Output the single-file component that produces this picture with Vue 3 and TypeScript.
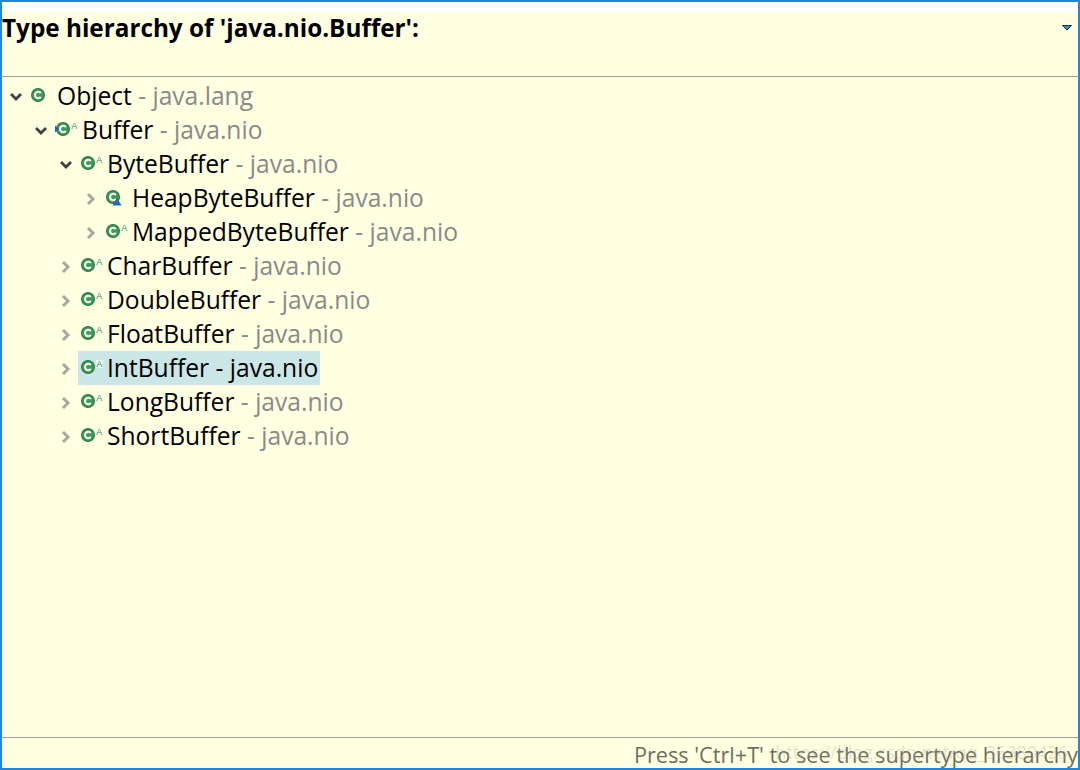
<script setup lang="ts">
interface Row { name: string; pkg: string; depth: number; open: boolean; badge: 'none' | 'a' | 'heap' | 'buffer'; selected?: boolean }
const rows: Row[] = [
  { name: 'Object', pkg: 'java.lang', depth: 0, open: true, badge: 'none' },
  { name: 'Buffer', pkg: 'java.nio', depth: 1, open: true, badge: 'buffer' },
  { name: 'ByteBuffer', pkg: 'java.nio', depth: 2, open: true, badge: 'a' },
  { name: 'HeapByteBuffer', pkg: 'java.nio', depth: 3, open: false, badge: 'heap' },
  { name: 'MappedByteBuffer', pkg: 'java.nio', depth: 3, open: false, badge: 'a' },
  { name: 'CharBuffer', pkg: 'java.nio', depth: 2, open: false, badge: 'a' },
  { name: 'DoubleBuffer', pkg: 'java.nio', depth: 2, open: false, badge: 'a' },
  { name: 'FloatBuffer', pkg: 'java.nio', depth: 2, open: false, badge: 'a' },
  { name: 'IntBuffer', pkg: 'java.nio', depth: 2, open: false, badge: 'a', selected: true },
  { name: 'LongBuffer', pkg: 'java.nio', depth: 2, open: false, badge: 'a' },
  { name: 'ShortBuffer', pkg: 'java.nio', depth: 2, open: false, badge: 'a' },
]
const indent = (d: number) => ({ paddingLeft: `${d * 25}px` })
</script>

<template>
  <div class="frame">
    <div class="topstrip"></div>
    <header class="head">
      <h1 class="title">Type hierarchy of 'java.nio.Buffer':</h1>
      <svg class="menu" width="11" height="6" viewBox="0 0 11 6">
        <path d="M0.5 0.5H9.5L5 5Z" fill="#3f8fa8" stroke="#0f2f5c" stroke-width="1" />
      </svg>
    </header>
    <main class="tree">
      <div v-for="r in rows" :key="r.name" class="row" :style="indent(r.depth)">
        <svg class="chev" width="14" height="14" viewBox="0 0 14 14">
          <path v-if="r.open" d="M2 4L7 9L12 4" fill="none" stroke="#404040" stroke-width="2.8" />
          <path v-else d="M4 2L9 7L4 12" fill="none" stroke="#a8a89e" stroke-width="3" />
        </svg>
        <span class="label" :class="{ sel: r.selected }">
          <svg class="ico" width="24" height="20" viewBox="0 0 24 20">
            <circle cx="8" cy="7" r="6.4" fill="#3f9a58" stroke="#2f7d47" stroke-width="1.2" />
            <path d="M10.8 5.1A3.2 3.2 0 1 0 10.8 8.9" fill="none" stroke="#f4faf0" stroke-width="2.1" />
            <path v-if="r.badge === 'buffer'" d="M0 3.5V10.5L4 7Z" fill="#2a5fb0" />
            <rect v-if="r.selected" x="16" y="0" width="6.5" height="8" fill="#f4fbf2" />
            <text v-if="r.badge === 'a' || r.badge === 'buffer'" x="16.3" y="7" class="a">A</text>
            <path v-if="r.badge === 'heap'" d="M7.5 15.5L12 8L16.5 15.5Z" fill="#2a66b8" />
          </svg>
          <span class="txt"><span class="name">{{ r.name }}</span><span class="pkg" :class="{ selpkg: r.selected }"> - {{ r.pkg }}</span></span>
        </span>
      </div>
    </main>
    <footer class="foot">
      <span class="hint">Press 'Ctrl+T' to see the supertype hierarchy</span>
      <span class="mark">https://blog.csdn.net/qq_36380426</span>
    </footer>
  </div>
</template>

<style>
html, body { margin: 0; padding: 0; background: #ffffe1; }
</style>

<style scoped>
.frame {
  box-sizing: border-box;
  width: 1080px;
  height: 770px;
  border: 2px solid #1e88e0;
  background: #ffffe1;
  display: flex;
  flex-direction: column;
  font-family: "Open Sans", "Noto Sans", sans-serif;
  overflow: hidden;
}
.topstrip { height: 10px; background: #fff; flex: none; }
.head {
  height: 65px;
  flex: none;
  box-sizing: border-box;
  border-bottom: 1px solid #a0a0a0;
  display: flex;
  justify-content: space-between;
  padding: 0 5px 0 0;
}
.title { margin: -1px 0 0 0; font-size: 24.3px; line-height: 34px; font-weight: 700; color: #000; }
.menu { margin-top: 13px; }
.tree { flex: 1; padding-top: 2px; }
.row { display: flex; height: 34px; align-items: center; margin-left: 7px; }
.chev { flex: none; margin: 2px 5px 0 0; }
.label { display: flex; align-items: center; height: 34px; padding: 0 2px; font-size: 24.6px; white-space: pre; }
.label.sel { background: #cbe6e6; }
.ico { flex: none; margin: 4px 3px 0 0; }
.txt { margin-top: -2px; }
.a { font-size: 9px; fill: #2a8f70; font-family: "Liberation Sans", sans-serif; }
.name { color: #000; }
.pkg { color: #8a8a8a; }
.selpkg { color: #000; }
.foot {
  flex: none;
  height: 31px;
  box-sizing: border-box;
  border-top: 1px solid #a0a0a0;
  position: relative;
  display: flex;
  justify-content: flex-end;
  align-items: center;
  padding-top: 2px;
  font-size: 21.7px;
  color: #6e6e60;
}
.hint { white-space: nowrap; }
.mark { position: absolute; right: 10px; top: 2px; font-size: 18px; color: rgba(170,170,170,.35); white-space: nowrap; }
</style>
